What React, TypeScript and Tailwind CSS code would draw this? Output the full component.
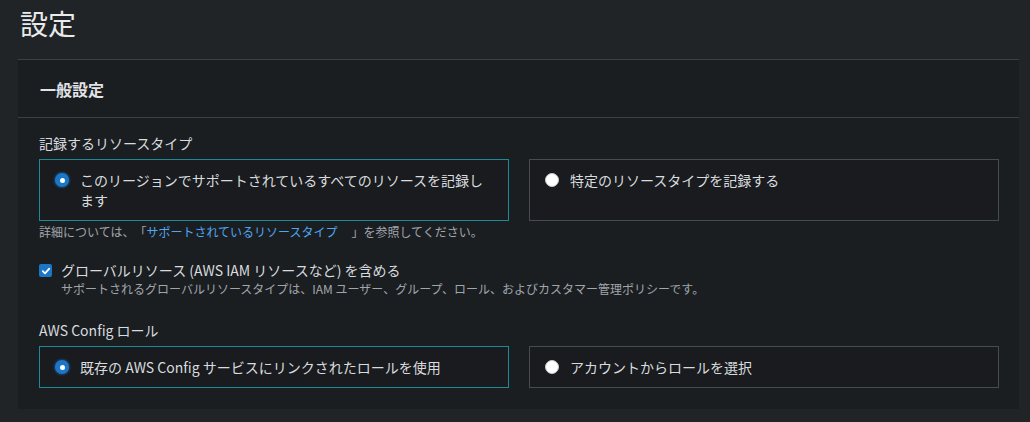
import React from "react";

const font = { fontFamily: '"Noto Sans CJK JP", "Noto Sans", "Open Sans", sans-serif' };

function Radio({ checked }: { checked: boolean }) {
  return checked ? (
    <span className="mt-[3px] flex h-[14px] w-[14px] shrink-0 items-center justify-center rounded-full bg-[#1b76c8] shadow-[0_0_3px_#1b76c8]">
      <span className="h-[5px] w-[5px] rounded-full bg-white" />
    </span>
  ) : (
    <span className="mt-[3px] h-[14px] w-[14px] shrink-0 rounded-full border border-[#c8cbd0] bg-white" />
  );
}

function Tile({ checked, children }: { checked: boolean; children: React.ReactNode }) {
  return (
    <div
      className={
        "flex flex-1 items-start gap-[11px] border px-[15px] py-[10px] bg-[#191b1e] " +
        (checked ? "border-[#1c8a99]" : "border-[#464b52]")
      }
    >
      <Radio checked={checked} />
      <div className="text-[14px] leading-[20px] text-[#d8dbdf]">{children}</div>
    </div>
  );
}

export default function App() {
  return (
    <div className="min-h-[422px] w-[1030px] bg-[#212427] pt-[5px] [text-spacing-trim:space-all]" style={font}>
      <h1 className="ml-[20px] h-[54px] text-[28px] leading-[36px] text-[#e8eaec]">設定</h1>
      <div className="ml-[18px] w-[1001px] border-t border-[#3b4045] bg-[#1b1e21]">
        <div className="flex h-[58px] items-center border-b border-[#3b4045] px-[22px]">
          <h2 className="text-[16px] font-bold text-[#e1e3e6]">一般設定</h2>
        </div>
        <div className="pb-[21px] pl-[21px] pr-[20px] pt-[15px]">
          <div className="text-[14px] leading-[20px] text-[#d8dbdf]">記録するリソースタイプ</div>
          <div className="mt-[6px] flex gap-[20px]">
            <Tile checked>
              このリージョンでサポートされているすべてのリソースを記録し
              <br />
              ます
            </Tile>
            <Tile checked={false}>特定のリソースタイプを記録する</Tile>
          </div>
          <div className="mt-[3px] text-[12px] leading-[16px] text-[#a1a6ad]">
            詳細については、「<span className="text-[#4fa6f2]">サポートされているリソースタイプ</span>
            <span className="inline-block w-[14px]" />」を参照してください。
          </div>
          <div className="mt-[21px] flex items-start gap-[9px]">
            <span className="mt-[3px] flex h-[13px] w-[13px] shrink-0 items-center justify-center rounded-[2px] bg-[#1b76c8]">
              <svg width="10" height="10" viewBox="0 0 10 10" fill="none">
                <path d="M1.8 5.2 L4 7.3 L8.3 2.6" stroke="white" strokeWidth="1.8" strokeLinecap="round" strokeLinejoin="round" />
              </svg>
            </span>
            <div>
              <div className="text-[14px] leading-[19px] text-[#d8dbdf]">
                グローバルリソース (AWS IAM リソースなど) を含める
              </div>
              <div className="text-[12px] leading-[17px] text-[#a1a6ad]">
                サポートされるグローバルリソースタイプは、IAM ユーザー、グループ、ロール、およびカスタマー管理ポリシーです。
              </div>
            </div>
          </div>
          <div className="mt-[23px] text-[14px] leading-[20px] text-[#d8dbdf]">AWS Config ロール</div>
          <div className="mt-[6px] flex gap-[20px]">
            <Tile checked>既存の AWS Config サービスにリンクされたロールを使用</Tile>
            <Tile checked={false}>アカウントからロールを選択</Tile>
          </div>
        </div>
      </div>
    </div>
  );
}
